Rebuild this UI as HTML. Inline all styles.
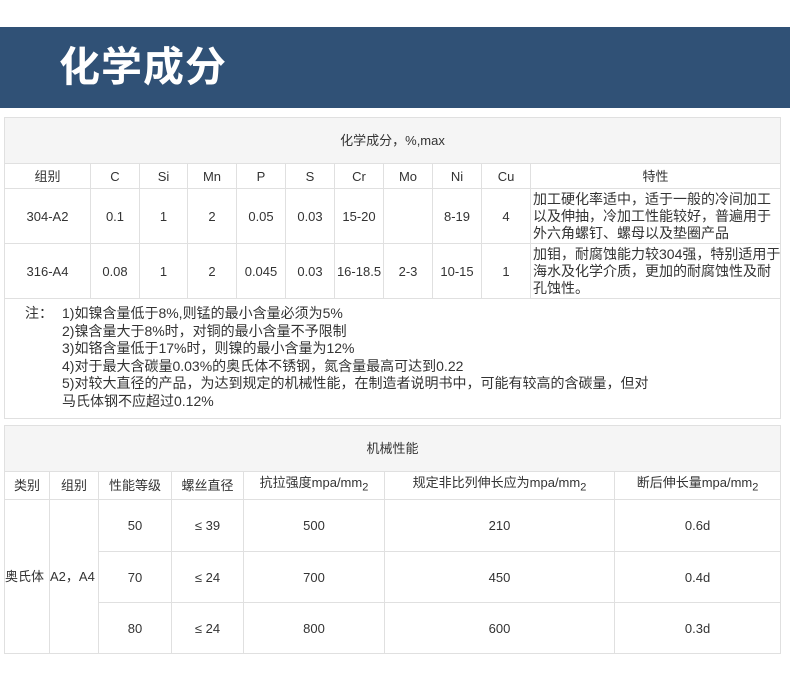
<!DOCTYPE html>
<html><head><meta charset="utf-8"><style>
*{margin:0;padding:0;box-sizing:border-box}
body{width:790px;height:674px;background:#fff;font-family:"Liberation Sans","Noto Sans CJK SC",sans-serif;color:#333;font-size:13px;position:relative;overflow:hidden}
.bar{position:absolute;left:0;top:27px;width:790px;height:81px;background:#305176}
.bar h1{position:absolute;left:59px;top:14px;color:#fff;font-size:41px;font-weight:bold;letter-spacing:1px;line-height:52px}
table{position:absolute;left:4px;border-collapse:collapse;table-layout:fixed}
td{border:1px solid #e0e0e0;text-align:center;vertical-align:middle;padding:0;line-height:17px}
.h{background:#f5f5f5}
.t{text-align:left;padding-left:2px;line-height:17px;font-size:14px;white-space:nowrap;overflow:hidden}
.n{text-align:left;vertical-align:top;padding:6px 0 0 20px;line-height:17.5px;font-size:14px}
sub{font-size:11px}
</style></head><body>
<div class="bar"><h1>化学成分</h1></div>
<table style="top:117px;width:776px">
<colgroup><col style="width:86px"><col style="width:49px"><col style="width:48px"><col style="width:49px"><col style="width:49px"><col style="width:49px"><col style="width:49px"><col style="width:49px"><col style="width:49px"><col style="width:49px"><col style="width:250px"></colgroup>
<tr style="height:46px"><td class="h" colspan="11">化学成分，%,max</td></tr>
<tr style="height:25px"><td>组别</td><td>C</td><td>Si</td><td>Mn</td><td>P</td><td>S</td><td>Cr</td><td>Mo</td><td>Ni</td><td>Cu</td><td>特性</td></tr>
<tr style="height:55px"><td>304-A2</td><td>0.1</td><td>1</td><td>2</td><td>0.05</td><td>0.03</td><td>15-20</td><td></td><td>8-19</td><td>4</td><td class="t">加工硬化率适中，适于一般的冷间加工<br>以及伸抽，冷加工性能较好，普遍用于<br>外六角螺钉、螺母以及垫圈产品</td></tr>
<tr style="height:55px"><td>316-A4</td><td>0.08</td><td>1</td><td>2</td><td>0.045</td><td>0.03</td><td>16-18.5</td><td>2-3</td><td>10-15</td><td>1</td><td class="t">加钼，耐腐蚀能力较304强，特别适用于<br>海水及化学介质，更加的耐腐蚀性及耐<br>孔蚀性。</td></tr>
<tr style="height:120px"><td colspan="11" class="n"><div style="display:flex"><span style="width:37px">注：</span><span>1)如镍含量低于8%,则锰的最小含量必须为5%<br>2)镍含量大于8%时，对铜的最小含量不予限制<br>3)如铬含量低于17%时，则镍的最小含量为12%<br>4)对于最大含碳量0.03%的奥氏体不锈钢，氮含量最高可达到0.22<br>5)对较大直径的产品，为达到规定的机械性能，在制造者说明书中，可能有较高的含碳量，但对<br>马氏体钢不应超过0.12%</span></div></td></tr>
</table>
<table style="top:425px;width:776px">
<colgroup><col style="width:45px"><col style="width:49px"><col style="width:73px"><col style="width:72px"><col style="width:141px"><col style="width:230px"><col style="width:166px"></colgroup>
<tr style="height:46px"><td class="h" colspan="7">机械性能</td></tr>
<tr style="height:28px"><td>类别</td><td>组别</td><td>性能等级</td><td>螺丝直径</td><td>抗拉强度mpa/mm<sub>2</sub></td><td>规定非比列伸长应为mpa/mm<sub>2</sub></td><td>断后伸长量mpa/mm<sub>2</sub></td></tr>
<tr style="height:52px"><td rowspan="3" style="text-align:left">奥氏体</td><td rowspan="3" style="text-align:left">A2，A4</td><td>50</td><td>≤ 39</td><td>500</td><td>210</td><td>0.6d</td></tr>
<tr style="height:51px"><td>70</td><td>≤ 24</td><td>700</td><td>450</td><td>0.4d</td></tr>
<tr style="height:51px"><td>80</td><td>≤ 24</td><td>800</td><td>600</td><td>0.3d</td></tr>
</table>
</body></html>
